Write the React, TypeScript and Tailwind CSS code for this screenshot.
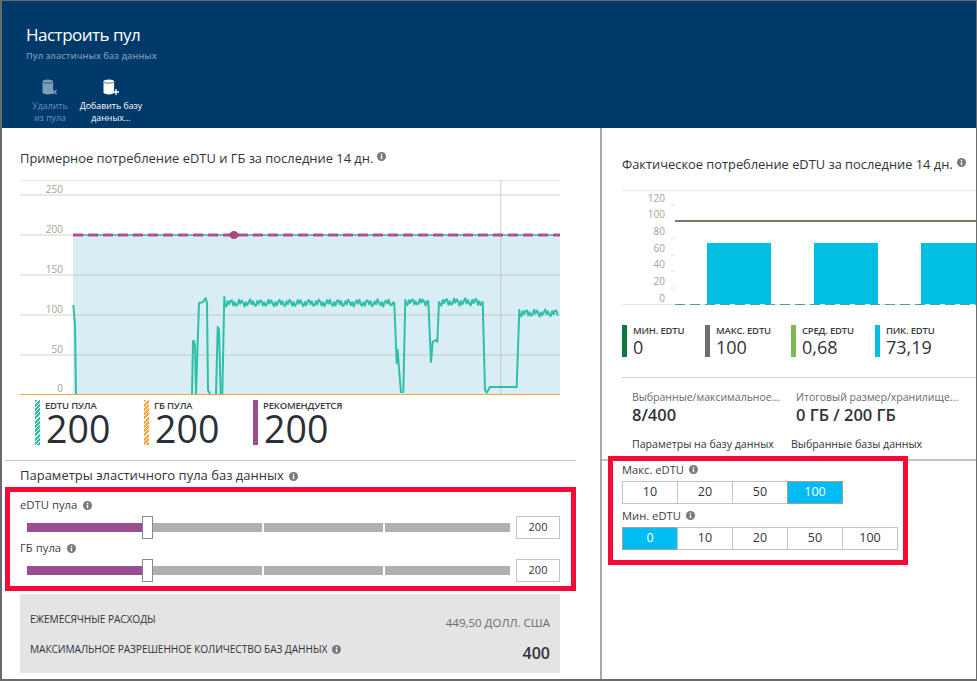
import React from "react";

const AXIS = "#a89f91";

function noisy(x0: number, x1: number, base: number, amp: number) {
  const pts: string[] = [];
  let i = 0;
  for (let x = x0; x < x1; x += 1.4) {
    const y = base + amp * (Math.sin(i * 2.4) * 0.7 + Math.sin(i * 0.9 + 1) * 0.5);
    pts.push(`${x.toFixed(1)},${y.toFixed(1)}`);
    i++;
  }
  return pts.join(" ");
}

// chart svg starts at page x=20, y=180
const lineSegments = [
  "53.3,125 55,145 56,214",
  "172,214 173,161 174,161 175,166 176,214",
  "176,214 179,123 183,122 185.7,118 187,123 188,210 190,214",
  "196,214 197.7,147 199,150 200.7,214",
  [
    "202.3,214 204.3,117",
    noisy(205, 374, 123, 3.6),
    "374.3,123 376.7,183 377.7,170 378.7,185 381,213",
  ].join(" "),
  [
    "383.3,213 385.3,120",
    noisy(386, 408, 122, 3.4),
    "408.3,121 411,182 412.7,162 415.7,160 417.3,162 419,122",
    noisy(420, 462, 122, 3.8),
    "462.7,122 465,210 466.7,212.7 470,207 496.7,207 499.3,130",
    noisy(500, 539, 133, 3.6),
  ].join(" "),
];

function Info({ className = "" }: { className?: string }) {
  return (
    <svg viewBox="0 0 10 10" className={`inline-block h-[9px] w-[9px] ${className}`}>
      <circle cx="5" cy="5" r="5" fill="#77797c" />
      <rect x="4.2" y="4.2" width="1.6" height="3.8" fill="#fff" />
      <rect x="4.2" y="2" width="1.6" height="1.5" fill="#fff" />
    </svg>
  );
}

function Db({ color, mark }: { color: string; mark: "x" | "plus" }) {
  return (
    <svg viewBox="0 0 16 17" className="h-[17px] w-[16px]">
      <path d="M.5 2.600C.5 1.200 2.900.4 5.800.4s5.300.8 5.300 2.200v10.600c0 1.400-2.400 2.200-5.300 2.200S.5 14.600.5 13.200Z" fill={color} />
      <path d="M1.200 3.400c1.200.9 8 .9 9.200 0" stroke="#003a6b" strokeWidth=".7" fill="none" />
      {mark === "plus" ? (
        <path d="M13 10v6M10 13h6" stroke={color} strokeWidth="1.3" />
      ) : (
        <path d="M10.500 11l4 4M14.500 11l-4 4" stroke={color} strokeWidth="1.200" />
      )}
    </svg>
  );
}

function PoolChart() {
  const grid = [15, 55, 95, 135, 175];
  const labels = [
    ["250", 15],
    ["200", 55],
    ["150", 95],
    ["100", 135],
    ["50", 175],
    ["0", 214],
  ] as const;
  return (
    <svg width="540" height="216" className="block">
      <rect x="53" y="55" width="487" height="159" fill="#d8eef4" />
      <path d="M0 .5H540" stroke="#ebe7dc" />
      {grid.map((y) => (
        <path key={y} d={`M0 ${y}H540`} stroke="#b9b39f" strokeOpacity=".4" strokeWidth="1.4" />
      ))}
      <path d="M480.700 0V214" stroke="#b9b39f" strokeOpacity=".45" strokeWidth="1.400" />
      {labels.map(([t, y]) => (
        <text key={t} x="43" y={y - 2} textAnchor="end" fontSize="10" fill={AXIS}>
          {t}
        </text>
      ))}
      {lineSegments.map((points) => (
        <polyline key={points} points={points} fill="none" stroke="#2fbfa9" strokeWidth="2" strokeLinejoin="round" />
      ))}
      <path d="M0 214.500H540" stroke="#f5a742" strokeWidth="1.200" />
      <path d="M53 55H540" stroke="#2fbfa9" strokeWidth="1.500" />
      <path d="M53 55H540" stroke="#b0508a" strokeWidth="3" strokeDasharray="10 5" />
      <circle cx="214" cy="55" r="4" fill="#a8487f" />
      <path d="M209 55h10" stroke="#a8487f" strokeWidth="3" />
    </svg>
  );
}

function UsageChart() {
  const labels = [
    ["120", 9],
    ["100", 25],
    ["80", 42],
    ["60", 59],
    ["40", 75],
    ["20", 92],
    ["0", 109],
  ] as const;
  return (
    <svg width="354" height="118" className="block">
      <path d="M0 .5H354" stroke="#efe9e2" />
      {[15, 48, 65, 81, 98].map((y) => (
        <path key={y} d={`M49 ${y}h4`} stroke="#e6e0d6" />
      ))}
      {labels.map(([t, y]) => (
        <text key={t} x="43" y={y + 3} textAnchor="end" fontSize="10" fill={AXIS}>
          {t}
        </text>
      ))}
      <rect x="85" y="53" width="64" height="61" fill="#00bfe3" />
      <rect x="192" y="53" width="64" height="61" fill="#00bfe3" />
      <rect x="299" y="53" width="55" height="61" fill="#00bfe3" />
      <path d="M53 31H354" stroke="#7d776c" strokeWidth="2" />
      <path d="M0 114.500H354" stroke="#efe5dc" />
      <path d="M53 114.500H354" stroke="#4faa6a" strokeDasharray="10 5" />
    </svg>
  );
}

function LegendBig({ label, bar, wide }: { label: string; bar: string; wide: string }) {
  return (
    <div className={`flex h-[45px] ${wide}`}>
      <div className={`h-full w-[5px] ${bar}`} />
      <div className="ml-[5px]">
        <div className="text-[9.500px] font-semibold leading-[12px] tracking-[-0.2px] text-[#3a3d42]">{label}</div>
        <div className="ml-px text-[37.500px] leading-[33px] text-[#2b3038]">200</div>
      </div>
    </div>
  );
}

function SliderRow({ label, mt }: { label: string; mt: string }) {
  return (
    <div className={mt}>
      <div className="ml-[10px] flex items-center gap-[6px] text-[11.300px] leading-[14px] text-[#3c4046]">
        {label}
        <Info />
      </div>
      <div className="ml-[17px] mt-[4px] flex h-[23px] items-center">
        <div className="h-[9px] w-[115px] bg-[#9a4d93]" />
        <div className="h-[23px] w-[11px] border border-[#8a8a8a] bg-white" />
        <div className="h-[9px] w-[109px] bg-[#b0b0b0]" />
        <div className="ml-[2px] h-[9px] w-[119px] bg-[#b0b0b0]" />
        <div className="ml-[2px] h-[9px] w-[125px] bg-[#b0b0b0]" />
        <div className="ml-[6px] flex h-[23px] w-[44px] items-center justify-center border border-[#c4c4c4] text-[11px] text-[#30343a]">
          200
        </div>
      </div>
    </div>
  );
}

function Stat({ label, value, color, width }: { label: string; value: string; color: string; width: string }) {
  return (
    <div className={`flex h-[32px] ${width}`}>
      <div className={`h-full w-[5px] ${color}`} />
      <div className="ml-[6px]">
        <div className="text-[9.500px] font-semibold leading-[12px] tracking-[-0.2px] text-[#3a3d42]">{label}</div>
        <div className="text-[18px] leading-[21px] text-[#30343a]">{value}</div>
      </div>
    </div>
  );
}

function Segments({ items, active }: { items: string[]; active: string }) {
  return (
    <div className="flex">
      {items.map((t, i) => (
        <div
          key={t}
          className={
            t === active
              ? `flex h-[23px] w-[56px] items-center justify-center border border-[#a0a0a0] bg-[#00bcf2] text-[12.500px] text-white ${i ? "ml-[-1px]" : ""}`
              : `flex h-[23px] w-[56px] items-center justify-center border border-[#c4c4c4] bg-white text-[12.500px] text-[#30343a] ${i ? "ml-[-1px]" : ""}`
          }
        >
          {t}
        </div>
      ))}
    </div>
  );
}

export default function App() {
  return (
    <div className="flex h-[681px] w-[977px] flex-col overflow-hidden border border-b-2 border-l-2 border-[#6a6a6a] bg-white font-['Open_Sans',sans-serif] text-[#30343a]">
      {/* blade header */}
      <header className="h-[127px] shrink-0 bg-[#003a6b] pl-[24px] pt-[22px]">
        <h1 className="text-[17px] leading-[24px] tracking-[-0.5px] text-white">Настроить пул</h1>
        <p className="mt-[3px] text-[9.200px] font-semibold leading-[12px] text-[#6f92b3]">Пул эластичных баз данных</p>
        <div className="mt-[17px] flex text-center text-[8.800px] leading-[12px]">
          <div className="flex w-[48px] flex-col items-center text-[#6f92b3]">
            <Db color="#7f9db8" mark="x" />
            <div className="mt-[4px]">
              Удалить
              <br />
              из пула
            </div>
          </div>
          <div className="ml-[3px] flex w-[68px] flex-col items-center text-white">
            <Db color="#ffffff" mark="plus" />
            <div className="mt-[4px] whitespace-nowrap">
              Добавить базу
              <br />
              данных...
            </div>
          </div>
        </div>
      </header>

      <div className="flex min-h-0 flex-1">
        {/* left blade */}
        <section className="h-full w-[600px] shrink-0 border-r-2 border-[#a8a8a8]">
          <div className="flex h-[52px] items-start gap-[4px] pl-[18px] pt-[21px] text-[12.900px] leading-[18px] text-[#30343a]">
            Примерное потребление eDTU и ГБ за последние 14 дн.
            <Info className="mt-[3px]" />
          </div>
          <div className="ml-[18px]">
            <PoolChart />
          </div>
          <div className="ml-[33px] mt-[4px] flex">
            <LegendBig
              label="EDTU ПУЛА"
              wide="w-[109px]"
              bar="bg-[repeating-linear-gradient(135deg,#2fbfa9_0px,#2fbfa9_2px,#ffffff_2px,#ffffff_3px)]"
            />
            <LegendBig
              label="ГБ ПУЛА"
              wide="w-[109px]"
              bar="bg-[repeating-linear-gradient(135deg,#f5a742_0px,#f5a742_2px,#ffffff_2px,#ffffff_3px)]"
            />
            <LegendBig label="РЕКОМЕНДУЕТСЯ" wide="w-[120px]" bar="bg-[#9a4d93]" />
          </div>
          <div className="ml-[3px] mt-[15px] h-px w-[571px] bg-[#c8c8c8]" />
          <div className="flex h-[26px] items-center gap-[5px] pl-[18px] pt-[4px] text-[13px] text-[#30343a]">
            Параметры эластичного пула баз данных
            <Info />
          </div>
          <div className="ml-[3px] h-[104px] w-[571px] border-[5px] border-[#f50a37] pt-[6px]">
            <SliderRow label="eDTU пула" mt="mt-0" />
            <SliderRow label="ГБ пула" mt="mt-[2px]" />
          </div>
          <div className="ml-[18px] mt-[3px] h-[79px] w-[540px] bg-[#e4e4e4] px-[10px] pt-[14px]">
            <div className="flex items-center justify-between">
              <span className="text-[10.200px] font-medium tracking-[-0.1px] text-[#30343a]">ЕЖЕМЕСЯЧНЫЕ РАСХОДЫ</span>
              <span className="mt-[6px] text-[11.500px] text-[#6b6b6b]">449,50 ДОЛЛ. США</span>
            </div>
            <div className="mt-[5px] flex items-start justify-between">
              <span className="mt-[6px] flex items-center gap-[5px] text-[10.200px] font-medium tracking-[-0.1px] text-[#30343a]">
                МАКСИМАЛЬНОЕ РАЗРЕШЕННОЕ КОЛИЧЕСТВО БАЗ ДАННЫХ
                <Info />
              </span>
              <span className="mt-[3px] text-[16px] font-semibold leading-[28px] text-[#30343a]">400</span>
            </div>
          </div>
        </section>

        {/* right blade */}
        <section className="h-full min-w-0 flex-1">
          <div className="flex h-[62px] items-start gap-[4px] pl-[20px] pt-[27px] text-[12.850px] leading-[18px] text-[#30343a] whitespace-nowrap">
            Фактическое потребление eDTU за последние 14 дн.
            <Info className="mt-[3px]" />
          </div>
          <div className="ml-[20px]">
            <UsageChart />
          </div>
          <div className="ml-[20px] mt-[17px] flex">
            <Stat label="МИН. EDTU" value="0" color="bg-[#0a7a3f]" width="w-[83px]" />
            <Stat label="МАКС. EDTU" value="100" color="bg-[#6d6f6e]" width="w-[86px]" />
            <Stat label="СРЕД. EDTU" value="0,68" color="bg-[#7fba50]" width="w-[84px]" />
            <Stat label="ПИК. EDTU" value="73,19" color="bg-[#00bfe3]" width="w-[80px]" />
          </div>
          <div className="ml-[20px] mt-[20px] h-px bg-[#d0d0d0]" />
          <div className="ml-[30px] mt-[12px] flex">
            <div className="w-[164px]">
              <div className="whitespace-nowrap text-[10.500px] leading-[14px] text-[#666a70]">Выбранные/максимальное...</div>
              <div className="text-[16.500px] font-semibold leading-[21px] text-[#30343a]">8/400</div>
            </div>
            <div>
              <div className="whitespace-nowrap text-[10.500px] leading-[14px] text-[#666a70]">Итоговый размер/хранилище...</div>
              <div className="text-[16.500px] font-semibold leading-[21px] text-[#30343a]">0 ГБ / 200 ГБ</div>
            </div>
          </div>
          <div className="ml-[30px] mt-[12px] flex text-[10.600px] leading-[14px] text-[#30343a]">
            <div className="w-[159px] whitespace-nowrap">Параметры на базу данных</div>
            <div className="whitespace-nowrap">Выбранные базы данных</div>
          </div>
          <div className="mt-[8px] h-[2px] bg-[#c4c4c4]" />
          {/* annotated box sits over the divider */}
          <div className="relative ml-[6px] mt-[-5px] h-[109px] w-[300px] border-[5px] border-[#f50a37] bg-white pl-[9px] pt-px">
            <div className="flex items-center gap-[5px] text-[11.200px] leading-[15px] text-[#3c4046]">
              Макс. eDTU
              <Info />
            </div>
            <div className="mt-[4px]">
              <Segments items={["10", "20", "50", "100"]} active="100" />
            </div>
            <div className="mt-[4px] flex items-center gap-[5px] text-[11.200px] leading-[15px] text-[#3c4046]">
              Мин. eDTU
              <Info />
            </div>
            <div className="mt-[4px]">
              <Segments items={["0", "10", "20", "50", "100"]} active="0" />
            </div>
          </div>
        </section>
      </div>
    </div>
  );
}
